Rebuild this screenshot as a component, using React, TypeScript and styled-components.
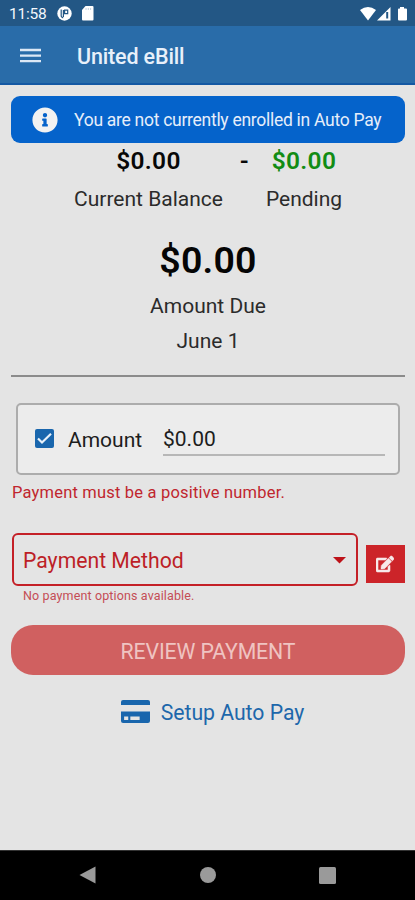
import React from "react";
import styled, { createGlobalStyle } from "styled-components";
import { FaEdit, FaInfoCircle } from "react-icons/fa";

const GlobalStyle = createGlobalStyle`
  *, *::before, *::after { box-sizing: border-box; }
  body { margin: 0; background: #e4e4e4; font-family: Roboto, sans-serif; }
  button { font-family: inherit; border: 0; padding: 0; background: none; }
`;

const Screen = styled.div`
  display: flex;
  flex-direction: column;
  width: 415px;
  height: 900px;
  overflow: hidden;
  background: #e4e4e4;
`;

const StatusBar = styled.div`
  display: flex;
  align-items: center;
  height: 26px;
  padding: 1px 7px 0 9px;
  background: #235785;
  color: #f4f8fc;
`;

const Clock = styled.span`
  width: 48px;
  font-size: 15.5px;
  letter-spacing: -0.2px;
`;

const StatusIcons = styled.div<{ $end?: boolean }>`
  display: flex;
  align-items: center;
  gap: ${(p) => (p.$end ? 0 : 9)}px;
  margin-left: ${(p) => (p.$end ? "auto" : "0")};
  svg { display: block; }
`;

const AppBar = styled.header`
  display: flex;
  align-items: center;
  height: 59px;
  padding: 4px 20px 0;
  background: #296ca9;
  border-bottom: 2px solid #1458a3;
`;

const MenuButton = styled.button`
  width: 57px;
  padding-bottom: 2px;
  svg { display: block; }
`;

const AppTitle = styled.h1`
  margin: 0;
  color: #e8f0fa;
  font-size: 21.5px;
  font-weight: 500;
  letter-spacing: -0.15px;
`;

const Content = styled.main`
  display: flex;
  flex-direction: column;
  flex: 1;
  padding: 11px 10px 0 11px;
`;

const Notice = styled.div`
  display: flex;
  align-items: center;
  height: 47px;
  padding: 1px 0 0 21px;
  border-radius: 9px;
  background: #0563cb;
  color: #e6eefa;
  font-size: 17.5px;
  letter-spacing: -0.28px;
  white-space: nowrap;
  svg { width: 26px; height: 26px; margin-right: 16px; color: #f2f2f2; }
`;

const Balances = styled.section`
  display: grid;
  grid-template-columns: 149px 43px 76px;
  justify-content: start;
  justify-items: center;
  padding-left: 63px;
  white-space: nowrap;
`;

const BalanceValue = styled.span<{ $color?: string }>`
  color: ${(p) => p.$color ?? "#080808"};
  font-size: 24.5px;
  font-weight: 600;
  line-height: 35px;
  padding-bottom: 2px;
  letter-spacing: 0.3px;
`;

const Label = styled.span<{ $line: number }>`
  color: #2b2b2b;
  font-size: 21px;
  line-height: ${(p) => p.$line}px;
  white-space: nowrap;
`;

const DueSummary = styled.section`
  display: flex;
  flex-direction: column;
  align-items: center;
  height: 157px;
  padding-top: 17px;
`;

const DueValue = styled.strong`
  color: #050505;
  font-size: 37.5px;
  font-weight: 600;
  line-height: 51px;
  letter-spacing: 0.2px;
`;

const Divider = styled.hr`
  width: 100%;
  height: 2px;
  margin: 0;
  border: 0;
  background: #8b8b8b;
`;

const AmountCard = styled.div`
  display: flex;
  align-items: center;
  height: 72px;
  margin: 26px 5px 0 5px;
  padding: 1px 13px 0 17px;
  border: 2px solid #acacac;
  border-radius: 5px;
  background: #ececec;
  color: #1d1d1d;
  font-size: 21px;
`;

const CheckBox = styled.span`
  display: grid;
  place-items: center;
  width: 19px;
  height: 19px;
  margin: 0 14px 2px 0;
  border-radius: 2px;
  background: #1966ad;
`;

const AmountLabel = styled.span`
  width: 95px;
`;

const AmountField = styled.span`
  flex: 1;
  height: 32px;
  line-height: 31px;
  margin-top: 1px;
  border-bottom: 2px solid #b7b7b7;
`;

const ErrorText = styled.p<{ $small?: boolean }>`
  margin: 0 0 0 ${(p) => (p.$small ? 12 : 1)}px;
  color: ${(p) => (p.$small ? "#c44d55" : "#c0262e")};
  font-size: ${(p) => (p.$small ? 12.5 : 16.5)}px;
  line-height: ${(p) => (p.$small ? 20 : 36)}px;
  letter-spacing: ${(p) => (p.$small ? 0.13 : 0.19)}px;
  white-space: nowrap;
`;

const MethodRow = styled.div`
  display: flex;
  align-items: flex-end;
  justify-content: space-between;
  margin: 22px 0 0 1px;
`;

const MethodSelect = styled.div`
  display: flex;
  align-items: center;
  justify-content: space-between;
  width: 346px;
  height: 53px;
  padding: 2px 10px 0 9px;
  border: 2px solid #c42027;
  border-radius: 6px;
  color: #bd1f27;
  font-size: 21.2px;
`;

const EditButton = styled.button`
  display: grid;
  place-items: center;
  width: 39px;
  height: 38px;
  margin-bottom: 3px;
  padding: 0 1px 1px 0;
  background: #cc2429;
  color: #f7e9e9;
`;

const ReviewButton = styled.button`
  height: 50px;
  margin-top: 19px;
  border-radius: 22px;
  background: #d06060;
  color: #efc4c2;
  font-size: 21.3px;
  letter-spacing: -0.15px;
  padding-top: 3px;
`;

const SetupLink = styled.a`
  display: flex;
  align-items: center;
  align-self: center;
  height: 75px;
  margin-left: 9px;
  color: #1d67ab;
  font-size: 21.2px;
  white-space: nowrap;
  svg { margin: 0 11px 2px 0; }
`;

const NavBar = styled.nav`
  display: flex;
  align-items: center;
  justify-content: space-between;
  height: 50px;
  padding: 0 79px;
  border-top: 1px solid #333;
  background: #000;
  svg { margin-bottom: 1px; }
`;

const ProfileIcon = () => (
  <svg width="15" height="15" viewBox="0 0 15 15">
    <circle cx="7.5" cy="7.5" r="7.2" fill="#fff" />
    <path d="M4.2 3.5V10.2Q4.8 11.4 6.2 11.8M6.4 4V11M7.6 4.1H10.7V7.6H7.6Z" fill="none" stroke="#235785" strokeWidth="1.2" />
  </svg>
);

const SdCardIcon = () => (
  <svg width="13" height="15" viewBox="0 0 13 15">
    <path d="M4.5 0H11.5Q12.5 0 12.5 1V13.5Q12.5 14.5 11.5 14.5H2Q1 14.5 1 13.5V4Z" fill="#fff" />
    <path d="M5 2V4M7.3 2V4M9.6 2V4" stroke="#c5d3e0" strokeWidth="1" />
  </svg>
);

const SignalIcons = () => (
  <svg width="49" height="16" viewBox="0 0 49 16">
    <path d="M1 4Q9-2.2 17 4L9 14.5Z" fill="#fff" />
    <path d="M31.5 1V14.5H18Z" fill="#fff" />
    <path d="M28.2 6V12.5" stroke="#235785" strokeWidth="2" />
    <path d="M41 1H45V2.4H47Q48 2.4 48 3.4V13.5Q48 14.5 47 14.5H40Q39 14.5 39 13.5V3.4Q39 2.4 40 2.4H41Z" fill="#fff" />
  </svg>
);

export default function App() {
  return (
    <>
      <GlobalStyle />
      <Screen>
        <StatusBar>
          <Clock>11:58</Clock>
          <StatusIcons>
            <ProfileIcon />
            <SdCardIcon />
          </StatusIcons>
          <StatusIcons $end>
            <SignalIcons />
          </StatusIcons>
        </StatusBar>
        <AppBar>
          <MenuButton aria-label="Menu">
            <svg width="21" height="16" viewBox="0 0 21 16">
              <path d="M0 2H21M0 7.6H21M0 13.2H21" stroke="#dce8f5" strokeWidth="2.3" />
            </svg>
          </MenuButton>
          <AppTitle>United eBill</AppTitle>
        </AppBar>
        <Content>
          <Notice>
            <FaInfoCircle />
            You are not currently enrolled in Auto Pay
          </Notice>
          <Balances>
            <BalanceValue>$0.00</BalanceValue>
            <BalanceValue>-</BalanceValue>
            <BalanceValue $color="#128c14">$0.00</BalanceValue>
            <Label $line={38}>Current Balance</Label>
            <span />
            <Label $line={38}>Pending</Label>
          </Balances>
          <DueSummary>
            <DueValue>$0.00</DueValue>
            <Label $line={40}>Amount Due</Label>
            <Label $line={30}>June 1</Label>
          </DueSummary>
          <Divider />
          <AmountCard>
            <CheckBox>
              <svg width="15" height="13" viewBox="0 0 15 13">
                <path d="M1 6.5L5 10.5L14 1.8" fill="none" stroke="#e8f1fa" strokeWidth="2.2" />
              </svg>
            </CheckBox>
            <AmountLabel>Amount</AmountLabel>
            <AmountField>$0.00</AmountField>
          </AmountCard>
          <ErrorText>Payment must be a positive number.</ErrorText>
          <MethodRow>
            <MethodSelect>
              Payment Method
              <svg width="13" height="7" viewBox="0 0 13 7">
                <path d="M0 0H13L6.5 6.5Z" fill="#bd1219" />
              </svg>
            </MethodSelect>
            <EditButton aria-label="Edit payment method">
              <FaEdit size={18} stroke="#f7e9e9" strokeWidth={18} />
            </EditButton>
          </MethodRow>
          <ErrorText $small>No payment options available.</ErrorText>
          <ReviewButton>REVIEW PAYMENT</ReviewButton>
          <SetupLink>
            <svg width="29" height="23" viewBox="0 0 28 23" preserveAspectRatio="none">
              <path d="M0 5V2Q0 0 2 0H26Q28 0 28 2V5ZM0 11.5H28V21Q28 23 26 23H2Q0 23 0 21Z" fill="#1966ad" />
              <path d="M3 16.5H7V20H3ZM9 16.5H18V20H9Z" fill="#e4e4e4" />
            </svg>
            Setup Auto Pay
          </SetupLink>
        </Content>
        <NavBar>
          <svg width="17" height="18" viewBox="0 0 17 18"><path d="M16.5 0.5V17.5L0.5 9Z" fill="#9a9a9a" /></svg>
          <svg width="16" height="16" viewBox="0 0 16 16"><circle cx="8" cy="8" r="8" fill="#9a9a9a" /></svg>
          <svg width="17" height="17" viewBox="0 0 17 17"><rect width="17" height="17" rx="1.5" fill="#9a9a9a" /></svg>
        </NavBar>
      </Screen>
    </>
  );
}
